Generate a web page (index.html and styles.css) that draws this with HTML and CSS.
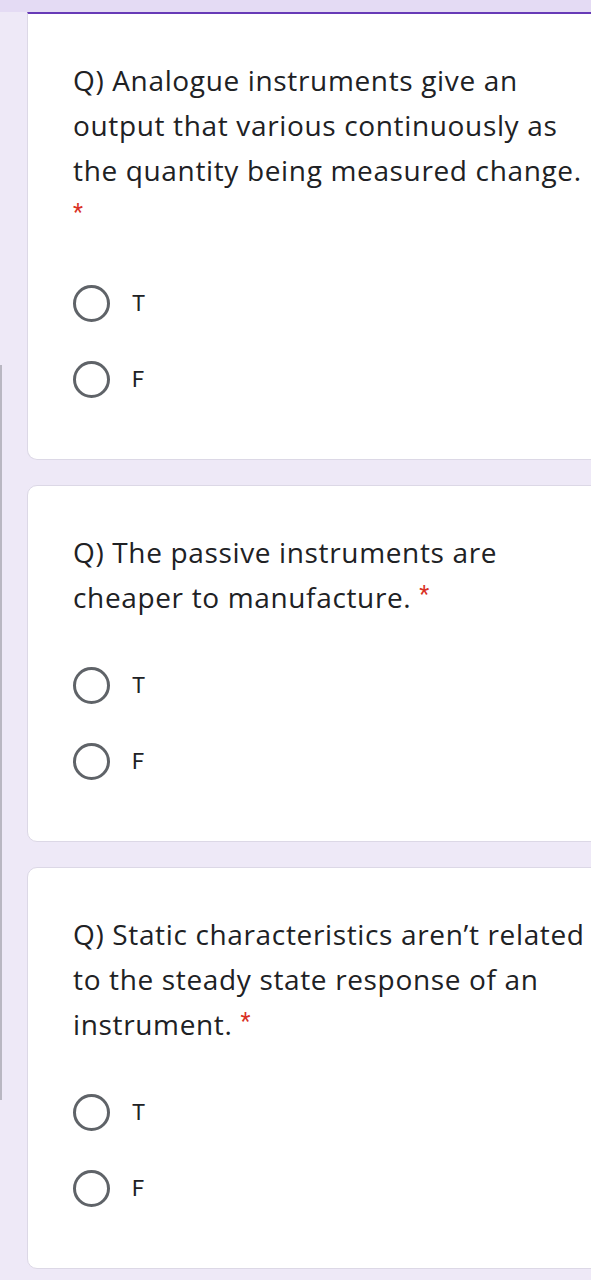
FILE: index.html
```html
<!DOCTYPE html>
<html lang="en">
<head>
<meta charset="utf-8">
<title>Quiz</title>
<link rel="stylesheet" href="styles.css">
</head>
<body>
<div class="top"></div>
<div class="page">
  <div class="rail"><div class="rail-line"></div></div>
  <div class="main">
    <section class="card card-first">
      <div class="question">Q) Analogue instruments give an<br>output that various continuously as<br>the quantity being measured change.<br><span class="req">*</span></div>
      <div class="options">
        <div class="option"><span class="radio"></span><span class="label">T</span></div>
        <div class="option"><span class="radio"></span><span class="label">F</span></div>
      </div>
    </section>
    <section class="card">
      <div class="question">Q) The passive instruments are<br>cheaper to manufacture. <span class="req">*</span></div>
      <div class="options">
        <div class="option"><span class="radio"></span><span class="label">T</span></div>
        <div class="option"><span class="radio"></span><span class="label">F</span></div>
      </div>
    </section>
    <section class="card">
      <div class="question">Q) Static characteristics aren’t related<br>to the steady state response of an<br>instrument. <span class="req">*</span></div>
      <div class="options">
        <div class="option"><span class="radio"></span><span class="label">T</span></div>
        <div class="option"><span class="radio"></span><span class="label">F</span></div>
      </div>
    </section>
  </div>
</div>
</body>
</html>
```
FILE: styles.css
```css
html, body {
  margin: 0;
  padding: 0;
}
body {
  background: #eee9f7;
  overflow: hidden;
  width: 591px;
  height: 1280px;
  font-family: Roboto, "Liberation Sans", sans-serif;
  color: #202124;
}
.top {
  height: 12px;
  background: #e4dbf4;
}
.page {
  display: flex;
}
.rail {
  width: 27px;
  flex: none;
}
.rail-line {
  margin-top: 353px;
  height: 735px;
  width: 2px;
  background: #b9b7c2;
}
.main {
  flex: 1;
  margin-right: -24px;
  display: flex;
  flex-direction: column;
  gap: 25px;
}
.card {
  background: #fff;
  border: 1px solid #dcd8e6;
  border-radius: 10px;
  padding: 44px 20px 62px 45px;
}
.card-first {
  border-top: 2px solid #673ab7;
  border-top-left-radius: 0;
  border-top-right-radius: 0;
  padding-top: 44px;
}
.question {
  font-family: "Open Sans", Roboto, sans-serif;
  font-size: 28px;
  line-height: 45px;
  letter-spacing: 0.65px;
  white-space: nowrap;
}
.req {
  font-family: Roboto, sans-serif;
  color: #d93025;
  font-size: 23px;
  vertical-align: top;
  position: relative;
  top: -3px;
}
.options {
  margin-top: 47px;
  display: flex;
  flex-direction: column;
  gap: 40px;
}
.option {
  display: flex;
  align-items: center;
  height: 36px;
}
.radio {
  box-sizing: border-box;
  width: 37px;
  height: 37px;
  border: 3.5px solid #5f6368;
  border-radius: 50%;
  flex: none;
}
.label {
  margin-left: 22px;
  font-size: 22px;
  color: #202124;
}
```
